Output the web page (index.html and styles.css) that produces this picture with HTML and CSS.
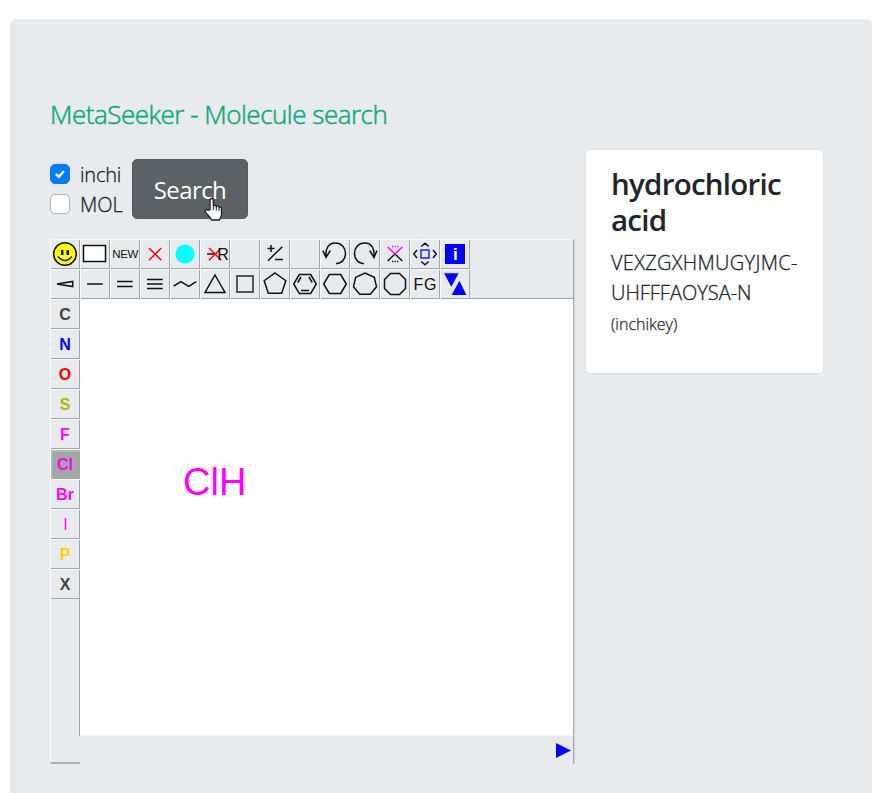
FILE: index.html
```html
<!DOCTYPE html>
<html lang="en"><head><meta charset="utf-8"><title>MetaSeeker</title><link rel="stylesheet" href="styles.css"></head>
<body>
<main class="jumbotron">
<h1 class="title">MetaSeeker - Molecule search</h1>
<div class="columns">
<section class="search">
<div class="controls">
<div class="checks">
<label class="check"><span class="box checked"><svg width="12" height="12" viewBox="0 0 12 12"><path d="M1.800 6.100 4.800 8.800 10 3" fill="none" stroke="#fff" stroke-width="2.300"/></svg></span><span class="inchi">inchi</span></label>
<label class="check"><span class="box"></span><span class="mol">MOL</span></label>
</div>
<button class="submit"><span>Search</span><svg class="cursor" width="20" height="26" viewBox="0 0 20 26"><path d="M6 13V3.500C6 .8 9.300.8 9.300 3.500V9c.5-1 2.700-.8 3 .6.7-.9 2.600-.5 2.800.8.9-.8 2.400-.2 2.400 1.400V17c0 3-1.300 4.300-2 6H7.500C6.500 20.500 3.500 18 1.500 15c-1-1.500 1-3 2.500-1.800z" fill="#fff" stroke="#1c1c30" stroke-width="1.300"/><path d="M9.300 9v4M12.300 10v3.500M15 11v3" stroke="#1c1c30"/></svg></button>
</div>
<div class="editor">
<div class="tools">
<svg class="tool" viewBox="0 0 30 30"><circle cx="15" cy="15" r="11.300" fill="#ff0"/><path d="M12.200 11v5M17.800 11v5" stroke-width="2.500"/><path d="M8 17.500Q15 25.500 22 17.500"/></svg>
<svg class="tool" viewBox="0 0 30 30"><rect x="3.500" y="6.500" width="22" height="16" fill="#fff"/></svg>
<svg class="tool" viewBox="0 0 30 30"><text x="2.300" y="19" font-size="11.500" textLength="26">NEW</text></svg>
<svg class="tool red" viewBox="0 0 30 30"><path d="M9 9 21.300 21.300M21.300 9 9 21.300"/></svg>
<svg class="tool" viewBox="0 0 30 30"><circle class="cyan" cx="15" cy="15" r="9.600"/></svg>
<svg class="tool" viewBox="0 0 30 30"><path d="M7 15h8"/><path class="red" d="M9 9 21.300 21.300M21.300 9 9 21.300"/><text x="17.300" y="20.600" font-size="16" textLength="11">R</text></svg>
<svg class="tool" viewBox="0 0 30 30"></svg>
<svg class="tool" viewBox="0 0 30 30"><path d="M7.500 9.500h7M11 6v7M8 21.700 22.300 7.700M15 20.500h8"/></svg>
<svg class="tool" viewBox="0 0 30 30"></svg>
<svg class="tool" viewBox="0 0 30 30"><path d="M6 18.500C5 9 9 4 15 4C22 4 25.500 9 25.500 14.500C25.500 20 22 24.500 16 24.700M2.800 11.500 6 18.500 10.300 11.500"/></svg>
<svg class="tool" viewBox="0 0 30 30"><path d="M24 18.500C25 9 21 4 15 4C8 4 4.500 9 4.500 14.500C4.500 20 8 24.500 14 24.700M27 11.500 24 18.500 19.700 11.500"/></svg>
<svg class="tool" viewBox="0 0 30 30"><path d="M7.700 22 15 15 22.300 22M12 22.500h1.300M14.500 22.500h1.300M17 22.500h1.300"/><path class="pink" d="M7.700 8 15 15 22.300 8M12 7.500h1.300M14.500 7.500h1.300M17 7.500h1.300"/></svg>
<svg class="tool" viewBox="0 0 30 30"><rect class="frame" x="11" y="11" width="8" height="8"/><path d="M11.300 7.500 15 4.300 18.700 7.500M11.300 22.500 15 25.700 18.700 22.500M7 11 3.800 15 7 19M23 11 26.200 15 23 19"/></svg>
<svg class="tool" viewBox="0 0 30 30"><path class="blue" d="M5 5h20v20H5z"/><text class="info" x="12.900" y="21" font-size="17">i</text></svg>
</div>
<div class="tools">
<svg class="tool" viewBox="0 0 30 30"><path d="M7 15 22.700 12.500V17.500z"/></svg>
<svg class="tool" viewBox="0 0 30 30"><path d="M7 15h15.700"/></svg>
<svg class="tool" viewBox="0 0 30 30"><path d="M7 12.500h15.700M7 17.500h15.700"/></svg>
<svg class="tool" viewBox="0 0 30 30"><path d="M7 10.500h15.700M7 15h15.700M7 19.500h15.700"/></svg>
<svg class="tool" viewBox="0 0 30 30"><path d="M3.700 17 10.900 12.700 18.700 17.300 26.300 12.700"/></svg>
<svg class="tool" viewBox="0 0 30 30"><path d="M15 6 25 23.500H5z"/></svg>
<svg class="tool" viewBox="0 0 30 30"><path class="square" d="M7 7h16v16H7z"/></svg>
<svg class="tool" viewBox="0 0 30 30"><path d="M15 4 25.800 11.700 21.700 24.300H8.300L4.200 11.700z"/></svg>
<svg class="tool" viewBox="0 0 30 30"><path d="M3.700 15 9.300 5.500H20.700L26.300 15 20.700 24.500H9.300zM7.800 13.500 11 8M19 8 22.200 13.500M11 21.500h8"/></svg>
<svg class="tool" viewBox="0 0 30 30"><path d="M3.700 15 9.300 5.500H20.700L26.300 15 20.700 24.500H9.300z"/></svg>
<svg class="tool" viewBox="0 0 30 30"><path d="M15 4 24.300 8.300 26.500 17.700 20.300 25.300H9.700L3.500 17.700 5.700 8.300z"/></svg>
<svg class="tool" viewBox="0 0 30 30"><path d="M10.500 4.500H19.500L25.500 10.500V19.500L19.500 25.500H10.500L4.500 19.500V10.500z"/></svg>
<svg class="tool" viewBox="0 0 30 30"><text x="3.500" y="20.600" font-size="16" textLength="23">FG</text></svg>
<svg class="tool" viewBox="0 0 30 30"><path class="blue" d="M4 4.300H18.700L11.300 17.700zM19.300 11.700 26.500 26H11.700z"/></svg>
</div>
<div class="workspace">
<div class="atoms">
<b class="atom dark">C</b><b class="atom n">N</b><b class="atom o">O</b><b class="atom s">S</b><b class="atom">F</b><b class="atom selected">Cl</b><b class="atom">Br</b><b class="atom thin">I</b><b class="atom p">P</b><b class="atom dark">X</b>
<div class="rest"></div>
</div>
<div class="drawing"><div class="canvas"><span class="molecule">ClH</span></div><div class="status"><svg width="16" height="16" viewBox="0 0 16 16"><path d="M0 0 15 7.500 0 15z" fill="#00f"/></svg></div></div>
</div>
</div>
</section>
<aside class="card"><h2>hydrochloric<br>acid</h2><p class="key"><span class="k1">VEXZGXHMUGYJMC-</span><br><span>UHFFFAOYSA-N</span></p><p class="note">(inchikey)</p></aside>
</div>
</main>
</body></html>
```
FILE: styles.css
```css
*{box-sizing:border-box}
body{margin:0;height:793px;overflow:hidden;padding:19px 16px 0 10px;background:#fff;color:#212529;font-family:"Open Sans","Noto Sans",sans-serif}
.jumbotron{height:800px;background:#e7ebee;border-radius:6px;padding:77px 40px 0}
.title{margin:-1px 0 0;height:54px;font-weight:300;font-size:26px;line-height:38px;color:#10a87a;letter-spacing:-.5px;white-space:nowrap;-webkit-text-stroke:.5px #10a87a}
.columns{display:flex;align-items:flex-start}
.search{width:525px;margin-right:10px;padding-top:10px}
.controls{display:flex;height:80px}
.checks{width:82px}
.check{display:flex;align-items:center;height:30px;font-size:20px;font-weight:300;line-height:30px;-webkit-text-stroke:.3px #212529}
.inchi{letter-spacing:-.2px;padding-top:2px}
.mol{padding-top:2px}
.box{width:20px;height:20px;border:1px solid #adb5bd;border-radius:5px;background:#fff;margin-right:10px;display:flex;align-items:center;justify-content:center}
.box.checked{background:#007bff;border-color:#007bff}
.submit{position:relative;width:116px;height:60px;background:#5a6268;border:1px solid #545b62;border-radius:5px;color:#fff;font:400 24px "Open Sans",sans-serif;padding:0;letter-spacing:-.6px}
.cursor{position:absolute;left:71px;top:37px}
.editor{width:525px;height:526px}
.tools{display:flex;height:30px;border-right:1px solid #a9adb0;margin-right:1px;box-shadow:1px 0 #cfd2d5}
.tools:first-child{border-top:1px solid #f5f7f8}
.tools:nth-child(2){border-bottom:1px solid #9fa2a4}
.tool{flex:none;width:30px;height:30px;fill:none;stroke:#111;stroke-width:1.5;box-shadow:inset 1px 1px #f8fafa,inset -1px -1px #a2a5a7}
.tools:first-child .tool{margin-top:-1px}
.tool text{fill:#111;stroke:none;font-family:"Liberation Sans",Arial,sans-serif}
.tool .info{fill:#fff;font-weight:700}
.tool .cyan{fill:#0ff;stroke:none}
.tool .blue{fill:#00f;stroke:none}
.tool .pink{stroke:#f0f}
.frame{stroke:#22f}
.red{stroke:#f00}
.square{stroke:#555;stroke-width:2}
.workspace{display:flex;height:465px}
.atoms{width:30px;display:flex;flex-direction:column}
.atom{height:30px;box-shadow:inset 1px 1px #f8fafa,inset -1px -1px #a2a5a7;font:700 16px/31px "Liberation Sans",Arial,sans-serif;text-align:center;color:#f0f}
.dark{color:#444}.n{color:#00f}.o{color:#f00}.s{color:#b4b400}.p{color:#fc0}
.thin{font-weight:400;padding-left:1px}
.selected{background:#a3a5a7;box-shadow:inset 1px 1px #f8fafa,inset 3px 3px #b5b8ba}
.rest{flex:1;border-left:1px solid #f8fafa;border-bottom:2px solid #abafb2;background:linear-gradient(#a2a5a7,#a2a5a7) right top/1px 137px no-repeat}
.drawing{width:495px}
.canvas{height:436px;background:#fff;border-right:1px solid #a9adb0;margin-right:1px;padding:160px 0 0 103px;box-shadow:1px 0 #cfd2d5}
.molecule{font:38px/46px "Liberation Sans",Arial,sans-serif;color:#f0f}
.status{height:29px;border-top:1px solid #f5f7f8;border-right:1px solid #a9adb0;margin-right:1px;display:flex;justify-content:flex-end;padding:7px 1px 0 0;box-shadow:1px 0 #cfd2d5}
.card{width:239px;height:225px;background:#fff;border:1px solid #dfe1e3;border-radius:5px;padding:16px 0 0 25px;white-space:nowrap}
h2,p{margin:0}
h2{font-size:29.5px;line-height:36px;font-weight:600;letter-spacing:-.75px}
.key{font-size:20px;font-weight:300;line-height:30px;margin-top:10px;-webkit-text-stroke:.3px #212529}
.k1{letter-spacing:.3px}
.note{font-size:16px;line-height:24px;font-weight:300;margin-top:4px;-webkit-text-stroke:.25px #212529}
```
